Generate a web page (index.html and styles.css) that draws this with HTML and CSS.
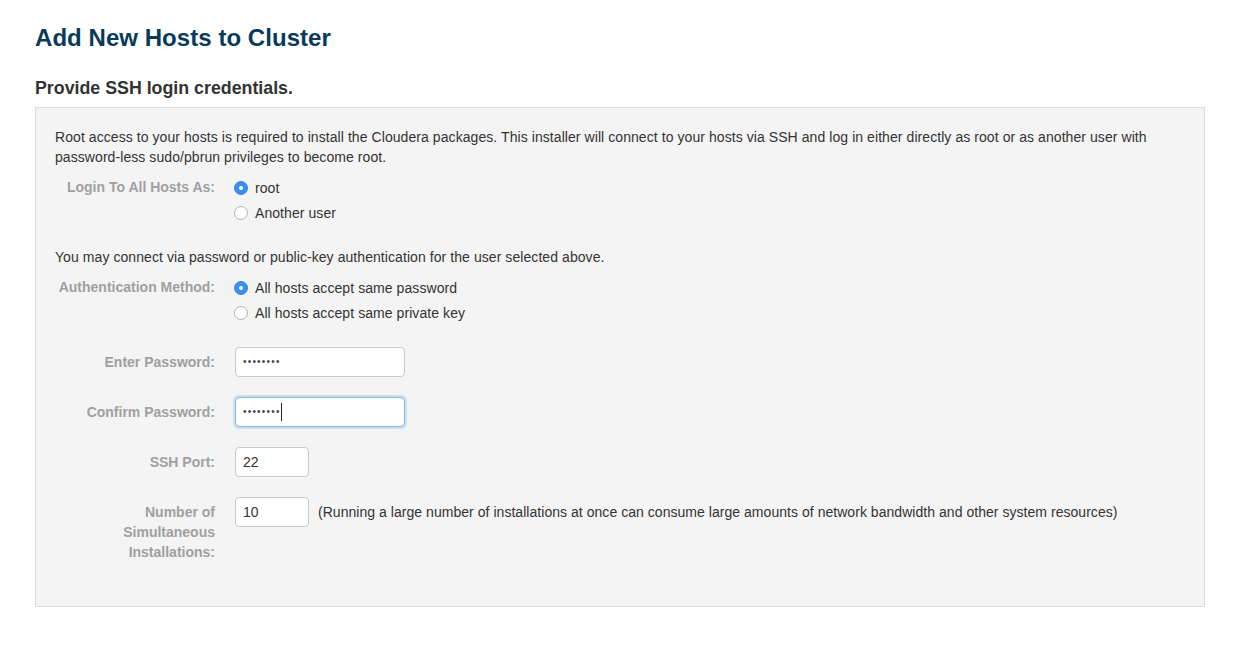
FILE: index.html
```html
<!DOCTYPE html>
<html>
<head>
<meta charset="utf-8">
<link rel="stylesheet" href="styles.css">
</head>
<body>
<div class="page">
  <h1 class="title">Add New Hosts to Cluster</h1>
  <h2 class="subtitle">Provide SSH login credentials.</h2>
  <div class="panel">
    <p class="para">Root access to your hosts is required to install the Cloudera packages. This installer will connect to your hosts via SSH and log in either directly as root or as another user with password-less sudo/pbrun privileges to become root.</p>

    <div class="row row-radio">
      <div class="label">Login To All Hosts As:</div>
      <div class="controls">
        <label class="opt"><span class="radio checked"></span>root</label>
        <label class="opt"><span class="radio"></span>Another user</label>
      </div>
    </div>

    <p class="para para-gap">You may connect via password or public-key authentication for the user selected above.</p>

    <div class="row row-radio">
      <div class="label">Authentication Method:</div>
      <div class="controls">
        <label class="opt"><span class="radio checked"></span>All hosts accept same password</label>
        <label class="opt"><span class="radio"></span>All hosts accept same private key</label>
      </div>
    </div>

    <div class="row row-input first-input">
      <div class="label">Enter Password:</div>
      <div class="controls inline">
        <div class="input wide"><span class="dots">••••••••</span></div>
      </div>
    </div>

    <div class="row row-input">
      <div class="label">Confirm Password:</div>
      <div class="controls inline">
        <div class="input wide focus"><span class="dots">••••••••</span><span class="caret"></span></div>
      </div>
    </div>

    <div class="row row-input">
      <div class="label">SSH Port:</div>
      <div class="controls inline">
        <div class="input narrow">22</div>
      </div>
    </div>

    <div class="row row-input">
      <div class="label">Number of Simultaneous Installations:</div>
      <div class="controls inline">
        <div class="input narrow">10</div>
        <span class="help">(Running a large number of installations at once can consume large amounts of network bandwidth and other system resources)</span>
      </div>
    </div>
  </div>
</div>
</body>
</html>
```
FILE: styles.css
```css
* { box-sizing: border-box; }
body {
  margin: 0;
  background: #fff;
  font-family: "Liberation Sans", Arial, Helvetica, sans-serif;
  color: #333;
}
.page {
  padding: 23px 49px 0 35px;
}
.title {
  margin: 0;
  font-size: 24px;
  line-height: 30px;
  font-weight: bold;
  color: #083a59;
  letter-spacing: 0.05px;
}
.subtitle {
  margin: 24px 0 0;
  font-size: 17.8px;
  line-height: 22px;
  font-weight: bold;
  color: #333;
}
.panel {
  margin-top: 8px;
  background: #f4f4f4;
  border: 1px solid #dcdcdc;
  padding: 19px 19px 43px 19px;
  height: 500px;
}
.para {
  margin: 0;
  font-size: 14px;
  line-height: 20px;
  color: #333;
  letter-spacing: 0.07px;
}
.para-gap {
  margin-top: 22px;
}
.row {
  display: flex;
  gap: 19px;
}
.row-radio {
  margin-top: 8px;
}
.label {
  width: 160px;
  flex: none;
  text-align: right;
  font-size: 14px;
  font-weight: bold;
  color: #a0a0a0;
}
.row-radio .label {
  line-height: 25px;
}
.row-input {
  margin-top: 20px;
}
.first-input {
  margin-top: 22px;
}
.row-input .label {
  padding-top: 5px;
  line-height: 20px;
}
.controls {
  display: flex;
  flex-direction: column;
  padding-left: 1px;
}
.row-radio .controls {
  padding-left: 0;
}
.controls.inline {
  flex-direction: row;
  align-items: flex-start;
}
.opt {
  display: flex;
  align-items: center;
  height: 25px;
  font-size: 14px;
  color: #333;
  letter-spacing: 0.07px;
}
.radio {
  width: 14px;
  height: 14px;
  border-radius: 50%;
  border: 1px solid #b4b4b4;
  background: #fff;
  margin-right: 7px;
  position: relative;
  flex: none;
}
.radio.checked {
  background: #3b8ff3;
  border-color: #3585e6;
}
.radio.checked::after {
  content: "";
  position: absolute;
  left: 4px;
  top: 4px;
  width: 4px;
  height: 4px;
  border-radius: 50%;
  background: #fff;
}
.input {
  height: 30px;
  border: 1px solid #cbcbcb;
  border-radius: 4px;
  background: #fff;
  padding: 0 7px;
  font-size: 14px;
  line-height: 28px;
  color: #333;
  display: flex;
  align-items: center;
  flex: none;
}
.input.wide { width: 170px; }
.input.narrow { width: 74px; }
.input.focus {
  border-color: #80b9ee;
  box-shadow: 0 0 0 2px rgba(128, 185, 238, 0.35);
}
.dots {
  font-size: 10px;
  letter-spacing: 1.2px;
  color: #444;
}
.caret {
  display: inline-block;
  width: 1px;
  height: 18px;
  background: #222;
  margin-left: 0;
}
.help {
  margin-left: 9px;
  font-size: 14px;
  line-height: 30px;
  color: #333;
  letter-spacing: 0.04px;
}
```
